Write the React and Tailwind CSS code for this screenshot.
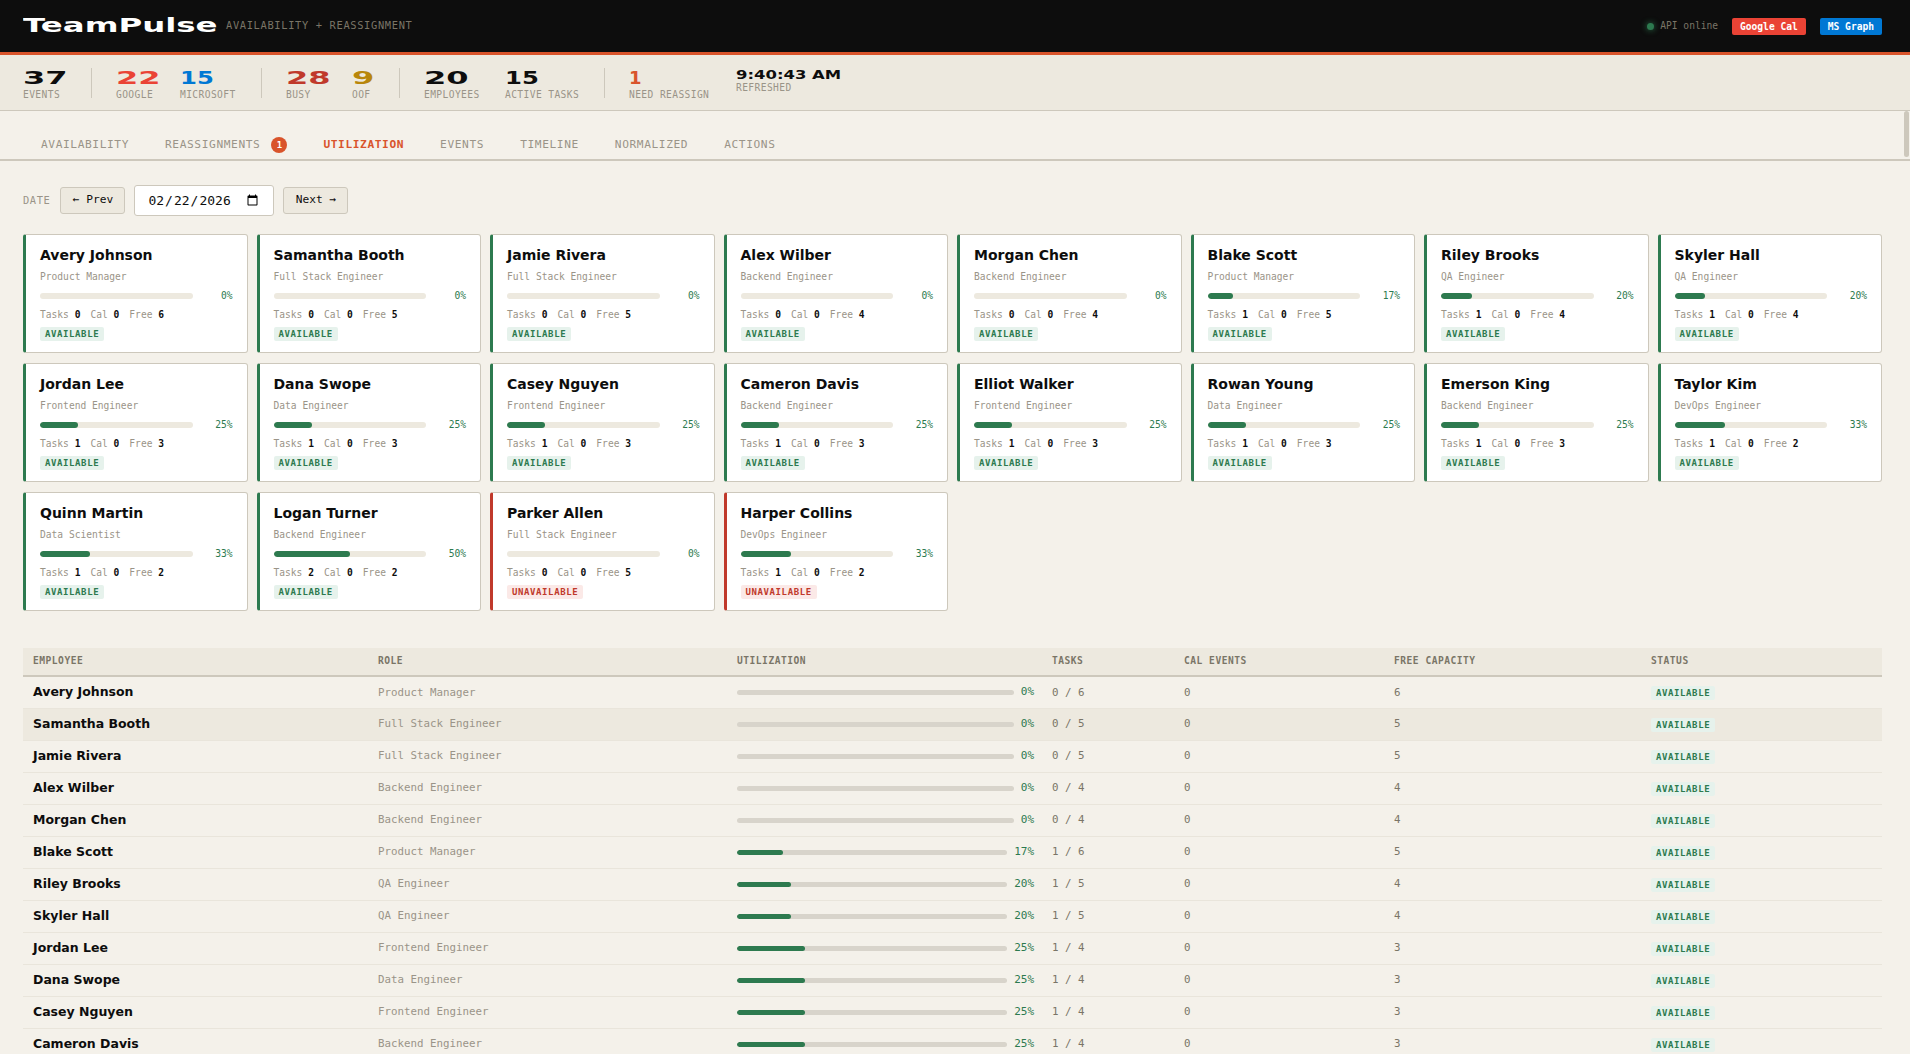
const mono = "font-['DejaVu_Sans_Mono','Liberation_Mono',monospace]";
const display = "font-['DejaVu_Sans',sans-serif] font-bold";

const EMPLOYEES = [
  { name: 'Avery Johnson', role: 'Product Manager', tasks: 0, cap: 6, free: 6, pct: 0 },
  { name: 'Samantha Booth', role: 'Full Stack Engineer', tasks: 0, cap: 5, free: 5, pct: 0 },
  { name: 'Jamie Rivera', role: 'Full Stack Engineer', tasks: 0, cap: 5, free: 5, pct: 0 },
  { name: 'Alex Wilber', role: 'Backend Engineer', tasks: 0, cap: 4, free: 4, pct: 0 },
  { name: 'Morgan Chen', role: 'Backend Engineer', tasks: 0, cap: 4, free: 4, pct: 0 },
  { name: 'Blake Scott', role: 'Product Manager', tasks: 1, cap: 6, free: 5, pct: 17 },
  { name: 'Riley Brooks', role: 'QA Engineer', tasks: 1, cap: 5, free: 4, pct: 20 },
  { name: 'Skyler Hall', role: 'QA Engineer', tasks: 1, cap: 5, free: 4, pct: 20 },
  { name: 'Jordan Lee', role: 'Frontend Engineer', tasks: 1, cap: 4, free: 3, pct: 25 },
  { name: 'Dana Swope', role: 'Data Engineer', tasks: 1, cap: 4, free: 3, pct: 25 },
  { name: 'Casey Nguyen', role: 'Frontend Engineer', tasks: 1, cap: 4, free: 3, pct: 25 },
  { name: 'Cameron Davis', role: 'Backend Engineer', tasks: 1, cap: 4, free: 3, pct: 25 },
  { name: 'Elliot Walker', role: 'Frontend Engineer', tasks: 1, cap: 4, free: 3, pct: 25 },
  { name: 'Rowan Young', role: 'Data Engineer', tasks: 1, cap: 4, free: 3, pct: 25 },
  { name: 'Emerson King', role: 'Backend Engineer', tasks: 1, cap: 4, free: 3, pct: 25 },
  { name: 'Taylor Kim', role: 'DevOps Engineer', tasks: 1, cap: 3, free: 2, pct: 33 },
  { name: 'Quinn Martin', role: 'Data Scientist', tasks: 1, cap: 3, free: 2, pct: 33 },
  { name: 'Logan Turner', role: 'Backend Engineer', tasks: 2, cap: 4, free: 2, pct: 50 },
  { name: 'Parker Allen', role: 'Full Stack Engineer', tasks: 0, cap: 5, free: 5, pct: 0, off: true },
  { name: 'Harper Collins', role: 'DevOps Engineer', tasks: 1, cap: 3, free: 2, pct: 33, off: true },
];

const TABS = ['Availability', 'Reassignments', 'Utilization', 'Events', 'Timeline', 'Normalized', 'Actions'];

function Stat({ value, label, color = 'text-[#0d0d0d]', width = 'w-auto', scale = 'scale-x-[1.78]' }) {
  return (
    <div className={`${width} pt-[2px]`}>
      <div className={`${display} ${color} ${scale} inline-block origin-left text-[18px] leading-[20px]`}>{value}</div>
      <div className={`${mono} -mt-[1px] text-[9.6px] leading-[12px] tracking-[0.4px] whitespace-nowrap text-[#9a9488]`}>{label}</div>
    </div>
  );
}

function Sep() {
  return <div className="-mr-px h-[30px] w-px bg-[#cdc8bc]" />;
}

function Badge({ off }) {
  return (
    <span className={`${mono} inline-block rounded-[2px] px-[5px] text-[9px] font-bold leading-[14px] tracking-[0.6px] ${off ? 'bg-[#fbe9e7] text-[#c0392b]' : 'bg-[#e6f2ec] text-[#2d7a4f]'}`}>
      {off ? 'UNAVAILABLE' : 'AVAILABLE'}
    </span>
  );
}

function Card({ emp }) {
  return (
    <div className={`h-[119px] rounded-[3px] border border-l-[3px] border-[#cdc8bc] bg-white pl-[14px] pr-[14px] pt-[11px] ${emp.off ? 'border-l-[#c0392b]' : 'border-l-[#2d7a4f]'}`}>
      <div className={`${display} whitespace-nowrap text-[14px] leading-[18px] text-[#0d0d0d]`}>{emp.name}</div>
      <div className={`${mono} mt-[7px] text-[9.6px] leading-[12px] text-[#9a9488]`}>{emp.role}</div>
      <div className="mt-[7px] flex items-center gap-2">
        <div className="h-[6px] flex-1 overflow-hidden rounded-[3px] bg-[#ede9df]">
          <div className="h-full rounded-[3px] bg-[#2d7a4f]" style={{ width: `${emp.pct}%` }} />
        </div>
        <div className={`${mono} w-[32px] text-right text-[9.6px] leading-[12px] text-[#2d7a4f]`}>{emp.pct}%</div>
      </div>
      <div className={`${mono} mt-[7px] flex gap-[10px] text-[9.6px] leading-[12px] text-[#9a9488]`}>
        <span>Tasks <b className="text-[#0d0d0d]">{emp.tasks}</b></span>
        <span>Cal <b className="text-[#0d0d0d]">0</b></span>
        <span>Free <b className="text-[#0d0d0d]">{emp.free}</b></span>
      </div>
      <div className="mt-[6px] flex h-[14px]"><Badge off={emp.off} /></div>
    </div>
  );
}

function Row({ emp, hover }) {
  const cell = `${mono} px-[10px] pt-px text-[10.8px] text-[#7a7567]`;
  return (
    <tr className={`h-[32px] border-b border-[#e9e5db] ${hover ? 'bg-[#ede9df]' : ''}`}>
      <td className={`${display} px-[10px] text-[12.5px] text-[#0d0d0d]`}>{emp.name}</td>
      <td className={`${cell} text-[#9a9488]`}>{emp.role}</td>
      <td className="pl-[10px] pr-[8px]">
        <div className="flex items-center gap-[7px]">
          <div className="h-[5px] flex-1 overflow-hidden rounded-[3px] bg-[#d8d4cb]">
            <div className="h-full rounded-[3px] bg-[#2d7a4f]" style={{ width: `${emp.pct}%` }} />
          </div>
          <div className={`${mono} text-[11px] text-[#2d7a4f]`}>{emp.pct}%</div>
        </div>
      </td>
      <td className={cell}>{emp.tasks} / {emp.cap}</td>
      <td className={cell}>0</td>
      <td className={cell}>{emp.free}</td>
      <td className="px-[10px] pt-px"><div className="flex"><Badge off={emp.off} /></div></td>
    </tr>
  );
}

export default function App() {
  const th = `${mono} px-[10px] text-left text-[9.6px] font-bold tracking-[0.5px] text-[#7a7567]`;
  return (
    <div className="flex h-screen flex-col overflow-hidden bg-[#f4f1ea]">
      <header className="flex h-[55px] shrink-0 items-center justify-between border-b-[3px] border-[#d9542b] bg-[#0d0d0d] pl-[23px] pr-[28px]">
        <div className="flex items-center">
          <div className={`${display} -mt-[2px] w-[203px] text-[20px] leading-none text-white`}>
            <span className="inline-block origin-left scale-x-[1.62]">TeamPulse</span>
          </div>
          <div className={`${mono} text-[10.4px] tracking-[0.65px] text-[#7a7567]`}>AVAILABILITY + REASSIGNMENT</div>
        </div>
        <div className="flex items-center">
          <span className="mr-[6px] h-[7px] w-[7px] rounded-full bg-[#2d7a4f] shadow-[0_0_6px_#2d7a4f]" />
          <span className={`${mono} mr-[14px] text-[9.6px] text-[#7a7567]`}>API online</span>
          <span className={`${mono} mr-[14px] rounded-[2px] bg-[#ea4335] px-[8px] text-[9.6px] font-bold leading-[17px] text-white`}>Google Cal</span>
          <span className={`${mono} rounded-[2px] bg-[#0078d4] px-[8px] text-[9.6px] font-bold leading-[17px] text-white`}>MS Graph</span>
        </div>
      </header>

      <div className="flex h-[56px] shrink-0 items-center gap-[25px] border-b border-[#cdc8bc] bg-[#ede9df] pl-[23px] pr-[28px]">
        <Stat value="37" label="EVENTS" width="w-[43px]" />
        <Sep />
        <div className="flex gap-[26px]">
          <Stat value="22" label="GOOGLE" color="text-[#ea4335]" width="w-[38px]" />
          <Stat value="15" label="MICROSOFT" color="text-[#0078d4]" width="w-[56px]" scale="scale-x-[1.35]" />
        </div>
        <Sep />
        <div className="flex gap-[25px]">
          <Stat value="28" label="BUSY" color="text-[#c0392b]" width="w-[41px]" />
          <Stat value="9" label="OOF" color="text-[#b8860b]" width="w-[22px]" />
        </div>
        <Sep />
        <div className="flex gap-[25px]">
          <Stat value="20" label="EMPLOYEES" width="w-[56px]" />
          <Stat value="15" label="ACTIVE TASKS" width="w-[74px]" scale="scale-x-[1.35]" />
        </div>
        <Sep />
        <Stat value="1" label="NEED REASSIGN" color="text-[#d9542b]" width="w-[82px]" scale="scale-x-[1]" />
        <div className="-mt-[3px]">
          <div className={`${display} origin-left scale-x-[1.37] text-[12px] leading-[14px] text-[#0d0d0d]`}>9:40:43 AM</div>
          <div className={`${mono} text-[9.6px] leading-[12px] tracking-[0.4px] text-[#9a9488]`}>REFRESHED</div>
        </div>
      </div>

      <main className="relative flex-1 overflow-hidden">
        <div className="absolute right-[1px] top-0 h-[46px] w-[5px] rounded-[3px] bg-[#cdc8bc]" />

        <nav className="flex h-[50px] items-end border-b-2 border-[#cdc8bc] pl-[23px]">
          {TABS.map((t) => (
            <div key={t} className={`${mono} flex h-[21px] items-start px-[18px] text-[11.2px] uppercase leading-[14px] tracking-[0.6px] ${t === 'Utilization' ? 'font-bold text-[#d9542b]' : 'text-[#9a9488]'}`}>
              {t}
              {t === 'Reassignments' && (
                <span className="ml-[11px] mt-[-1px] flex h-[16px] w-[16px] items-center justify-center rounded-full bg-[#d9542b] text-[9px] font-bold tracking-normal text-white">1</span>
              )}
            </div>
          ))}
        </nav>

        <div className="pl-[23px] pr-[28px]">
          <div className="mt-[24px] flex items-center">
            <span className={`${mono} mr-[10px] text-[10.4px] tracking-[0.6px] text-[#9a9488]`}>DATE</span>
            <button className={`${mono} h-[27px] w-[65px] rounded-[3px] border border-[#cdc8bc] bg-[#ede9df] text-[11.2px] text-[#0d0d0d]`}>← Prev</button>
            <input
              type="date"
              defaultValue="2026-02-22"
              className={`${mono} mx-[9px] h-[31px] w-[140px] rounded-[3px] border border-[#cdc8bc] bg-white px-[12px] text-[13px] text-[#0d0d0d]`}
            />
            <button className={`${mono} h-[27px] w-[65px] rounded-[3px] border border-[#cdc8bc] bg-[#ede9df] text-[11.2px] text-[#0d0d0d]`}>Next →</button>
          </div>

          <div className="mt-[18px] grid grid-cols-8 gap-x-[9px] gap-y-[10px]">
            {EMPLOYEES.map((e) => <Card key={e.name} emp={e} />)}
          </div>

          <table className="mt-[37px] w-full table-fixed border-collapse">
            <colgroup>
              <col className="w-[345px]" />
              <col className="w-[359px]" />
              <col className="w-[315px]" />
              <col className="w-[132px]" />
              <col className="w-[210px]" />
              <col className="w-[257px]" />
              <col />
            </colgroup>
            <thead>
              <tr className="h-[28px] border-b-2 border-[#cdc8bc] bg-[#ede9df]">
                <th className={th}>EMPLOYEE</th>
                <th className={th}>ROLE</th>
                <th className={th}>UTILIZATION</th>
                <th className={th}>TASKS</th>
                <th className={th}>CAL EVENTS</th>
                <th className={th}>FREE CAPACITY</th>
                <th className={th}>STATUS</th>
              </tr>
            </thead>
            <tbody>
              {EMPLOYEES.map((e, i) => <Row key={e.name} emp={e} hover={i === 1} />)}
            </tbody>
          </table>
        </div>
      </main>
    </div>
  );
}
